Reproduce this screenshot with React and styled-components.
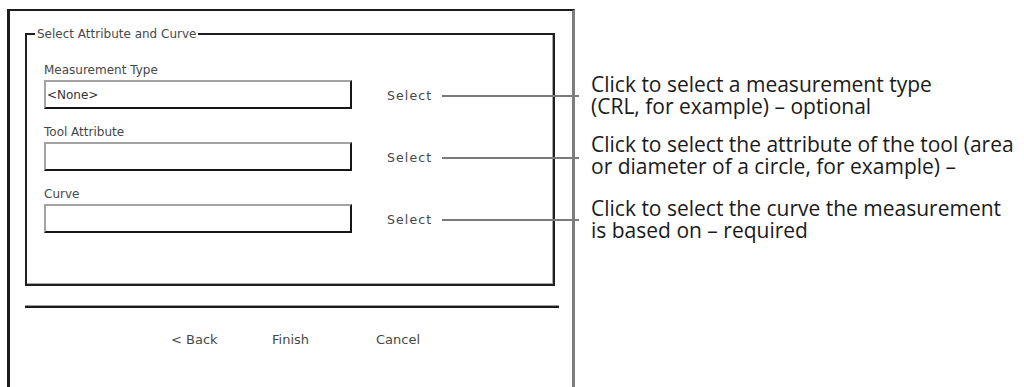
import React from "react";
import styled, { createGlobalStyle } from "styled-components";

const Global = createGlobalStyle`
  html, body { margin: 0; padding: 0; background: #fff; }
  body { overflow: hidden; }
  #root { width: 1024px; height: 387px; }
`;

const Page = styled.div`
  display: flex;
  align-items: stretch;
  box-sizing: border-box;
  width: 1024px;
  height: 387px;
  padding: 9px 0 0 7px;
  background: #fff;
  overflow: hidden;
`;

const Dialog = styled.div`
  position: relative;
  box-sizing: border-box;
  width: 568px;
  flex: none;
  border-left: 3px solid #1c1c1c;
  border-top: 2px solid #1c1c1c;
  border-right: 3px solid #7d7d7d;
  padding: 16px 0 0 15px;
  font-family: "DejaVu Sans", Verdana, sans-serif;
  font-size: 12px;
  color: #474747;
  display: flex;
  flex-direction: column;
`;

const Group = styled.fieldset`
  margin: 0 17px 0 0;
  padding: 22px 0 51px 17px;
  border: 2px solid #1f1f1f;
  box-shadow: inset -1px -1px 0 #a8a8a8;
  display: flex;
  flex-direction: column;
  gap: 16px;
`;

const Legend = styled.legend`
  margin-left: -9px;
  padding: 0 2px;
  font-size: 12px;
  line-height: 14px;
  color: #474747;
`;

const Field = styled.div`
  display: flex;
  flex-direction: column;
  gap: 3px;
`;

const Label = styled.div`
  line-height: 14px;
  height: 14px;
`;

const FieldRow = styled.div`
  display: flex;
  align-items: center;
`;

const TextBox = styled.div`
  box-sizing: border-box;
  width: 308px;
  height: 29px;
  border-top: 2px solid #a3a3a3;
  border-left: 2px solid #a3a3a3;
  border-right: 2px solid #161616;
  border-bottom: 2px solid #161616;
  padding: 0 1px;
  display: flex;
  align-items: center;
  color: #333;
`;

const SelectButton = styled.span`
  position: relative;
  margin-left: 35px;
  padding-top: 2px;
  font-size: 12.5px;
  letter-spacing: 1.1px;
  line-height: 14px;
`;

const Leader = styled.span`
  position: absolute;
  left: calc(100% + 10px);
  top: 8px;
  width: 137px;
  height: 2px;
  background: #7a7a7a;
`;

const Separator = styled.div`
  margin: 19px 13px 0 0;
  height: 1px;
  border-top: 1px solid #a0a0a0;
  background: #1a1a1a;
  border-bottom: 1px solid #1a1a1a;
`;

const ButtonRow = styled.div`
  display: flex;
  padding: 24px 0 0 146px;
`;

const Button = styled.span`
  width: ${(p) => (p.$w ? `${p.$w}px` : "auto")};
  font-size: 13px;
  line-height: 16px;
`;

const Notes = styled.div`
  display: flex;
  flex-direction: column;
  margin: 64px 0 0 16px;
  font-family: "Open Sans", "Noto Sans", sans-serif;
  font-size: 21px;
  line-height: 22px;
  color: #1a1a1a;
`;

const Note = styled.div`
  white-space: pre;
  margin-top: ${(p) => p.$gap}px;
`;

const fields = [
  { label: "Measurement Type", value: "<None>" },
  { label: "Tool Attribute", value: "" },
  { label: "Curve", value: "" },
];

const notes = [
  { gap: 0, text: "Click to select a measurement type\n(CRL, for example) \u2013 optional" },
  { gap: 16, text: "Click to select the attribute of the tool (area\nor diameter of a circle, for example) \u2013" },
  { gap: 20, text: "Click to select the curve the measurement\nis based on \u2013 required" },
];

export default function App() {
  return (
    <>
      <Global />
      <Page>
        <Dialog>
          <Group>
            <Legend>Select Attribute and Curve</Legend>
            {fields.map((f) => (
              <Field key={f.label}>
                <Label>{f.label}</Label>
                <FieldRow>
                  <TextBox>{f.value}</TextBox>
                  <SelectButton>
                    Select
                    <Leader />
                  </SelectButton>
                </FieldRow>
              </Field>
            ))}
          </Group>
          <Separator />
          <ButtonRow>
            <Button $w={101}>&lt; Back</Button>
            <Button $w={104}>Finish</Button>
            <Button>Cancel</Button>
          </ButtonRow>
        </Dialog>
        <Notes>
          {notes.map((n) => (
            <Note key={n.text} $gap={n.gap}>
              {n.text}
            </Note>
          ))}
        </Notes>
      </Page>
    </>
  );
}
